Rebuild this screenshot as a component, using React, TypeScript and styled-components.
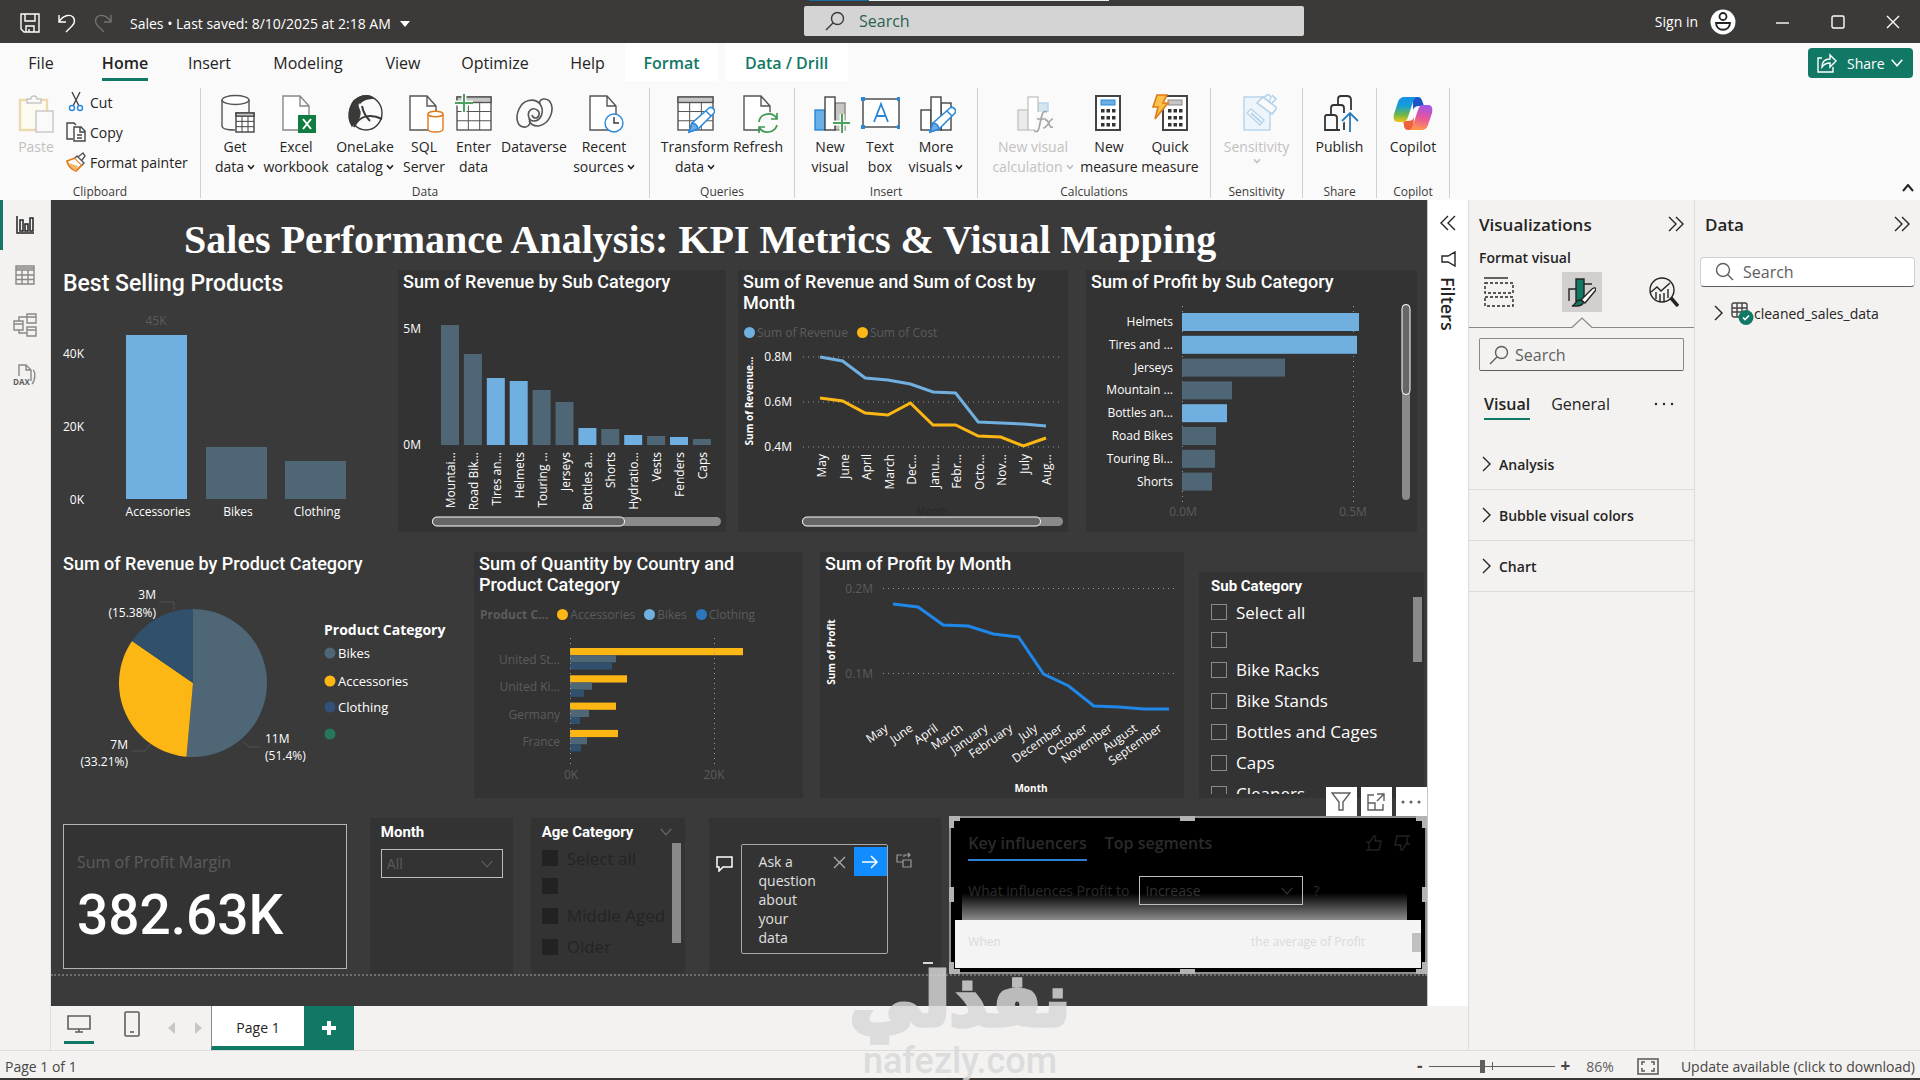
import React from "react";
import styled, { createGlobalStyle } from "styled-components";

const ui = `"Open Sans", "Noto Sans", sans-serif`;
const din = `Roboto, "Liberation Sans", sans-serif`;
const green = "#117865";
const sky = "#70b0e0";
const slate = "#4f6677";
const amber = "#fdb714";
const navy = "#30506c";

const Global = createGlobalStyle`
  * { box-sizing: border-box; }
  html, body { margin: 0; height: 100%; }
  #root { height: 100%; }
  body { font-family: ${ui}; font-size: 14px; color: #252423; background: #f3f2f1; overflow: hidden; }
  button, input, select { font: inherit; color: inherit; margin: 0; }
  button { border: 0; background: none; padding: 0; cursor: pointer; }
  h1, h2, h3, p, ul { margin: 0; padding: 0; font-weight: inherit; }
  svg { display: block; flex: none; }
`;

const Shell = styled.div`
  display: flex;
  flex-direction: column;
  height: 100vh;
  border-bottom: 2px solid #383735;
`;

/* ---------- title bar ---------- */
const TitleBar = styled.header`
  position: relative;
  display: grid;
  grid-template-columns: 804fr 500px 616fr;
  align-items: center;
  height: 43px;
  flex: none;
  background: #3b3a38;
  color: #fff;
`;
const TabPeek = styled.div`
  position: absolute;
  top: 0;
  left: 809px;
  width: 300px;
  height: 1px;
  background: linear-gradient(90deg, #1c6a9c 60px, #e4efee 60px);
`;
const QuickBar = styled.div`
  display: flex;
  align-items: center;
  gap: 18px;
  padding: 2px 0 0 20px;
`;
const FileName = styled.button`
  display: flex;
  align-items: center;
  gap: 9px;
  line-height: 20px;
  padding-top: 3px;
  white-space: nowrap;
`;
const TopSearch = styled.label`
  display: flex;
  align-items: center;
  gap: 14px;
  height: 30px;
  margin-bottom: 1px;
  padding-left: 21px;
  border-radius: 2px;
  background: #d4d4d4;
  color: #3b3a38;
`;
const PlainInput = styled.input<{ $tint?: string }>`
  flex: 1;
  min-width: 0;
  border: 0;
  outline: 0;
  padding: 0;
  background: transparent;
  font-size: 16px;
  &::placeholder { color: ${(p) => p.$tint || "#605e5c"}; opacity: 1; }
`;
const WindowTools = styled.div`
  display: flex;
  align-items: center;
  justify-content: flex-end;
  padding-right: 17px;
`;
const SignIn = styled.button`
  display: flex;
  align-items: center;
  gap: 12px;
  margin-right: 2px;
`;
const WinButton = styled.button`
  display: grid;
  place-items: center;
  width: 20px;
  height: 30px;
  margin-left: 35px;
`;

/* ---------- ribbon ---------- */
const TabRow = styled.nav`
  display: flex;
  align-items: flex-start;
  height: 38px;
  flex: none;
  padding: 0 7px 0 8px;
  background: #fafafa;
`;
const Tab = styled.button<{ $w: number; $on?: boolean; $ctx?: boolean }>`
  width: ${(p) => p.$w}px;
  height: 38px;
  display: flex;
  justify-content: center;
  font-size: 16px;
  line-height: 34px;
  padding-top: 3px;
  white-space: nowrap;
  font-weight: ${(p) => (p.$on || p.$ctx ? 600 : 400)};
  color: ${(p) => (p.$ctx ? green : "#252423")};
  background: ${(p) => (p.$ctx ? "#fff" : "transparent")};
  margin-left: ${(p) => (p.$ctx ? 7 : 0)}px;
  span { height: 35px; border-bottom: 3px solid ${(p) => (p.$on ? green : "transparent")}; }
`;
const ShareButton = styled.button`
  display: flex;
  align-items: center;
  gap: 10px;
  width: 105px;
  height: 30px;
  margin: 5px 0 0 auto;
  padding: 0 9px;
  border-radius: 4px;
  color: #fff;
  background: ${green};
  svg:last-child { margin-left: -5px; }
`;
const Ribbon = styled.section`
  display: flex;
  height: 119px;
  flex: none;
  padding: 7px 6px 2px 0;
  background: #fafafa;
`;
const Tools = styled.div`
  display: flex;
  flex: 1;
`;
const Group = styled.div<{ $w: number; $pad?: number }>`
  display: flex;
  flex-direction: column;
  width: ${(p) => p.$w}px;
  border-right: 1px solid #d2d0ce;
  ${Tools} { padding-left: ${(p) => p.$pad || 0}px; }
`;
const GroupName = styled.div`
  text-align: center;
  font-size: 12px;
  line-height: 16px;
  color: #3b3a38;
  margin-bottom: -2px;
`;
const Tool = styled.button<{ $w: number; $off?: boolean }>`
  display: flex;
  flex-direction: column;
  align-items: center;
  width: ${(p) => p.$w}px;
  padding-top: 6px;
  line-height: 20px;
  white-space: nowrap;
  color: ${(p) => (p.$off ? "#c3c1bf" : "#252423")};
  & > svg { margin-bottom: 3px; }
  & > span { display: flex; align-items: center; gap: 3px; }
`;
const ClipList = styled.div`
  display: flex;
  flex-direction: column;
  padding-left: 10px;
  margin-top: -1px;
`;
const ClipItem = styled.button`
  display: flex;
  align-items: center;
  gap: 4px;
  height: 30px;
  white-space: nowrap;
`;
const Collapse = styled.button`
  margin: auto 0 6px auto;
`;

/* ---------- work area ---------- */
const Work = styled.div`
  display: flex;
  flex: 1;
  min-height: 0;
`;
const Rail = styled.nav`
  width: 51px;
  flex: none;
  border-right: 1px solid #e1dfdd;
`;
const RailButton = styled.button<{ $on?: boolean }>`
  display: grid;
  place-items: center;
  width: 50px;
  height: 50px;
  border-left: 3px solid ${(p) => (p.$on ? green : "transparent")};
  padding-right: 3px;
`;
const Center = styled.div`
  display: flex;
  flex-direction: column;
  flex: 1;
  min-width: 0;
`;
const Stage = styled.div`
  display: flex;
  flex: 1;
  min-height: 0;
`;
const Report = styled.main`
  flex: 1;
  min-width: 0;
  background: #3a3a3a;
  color: #fff;
  overflow: hidden;
`;
const ReportTitle = styled.h1`
  padding: 16px 0 6px 133px;
  font: bold 40px/48px "Liberation Serif", serif;
  white-space: nowrap;
`;
const Row = styled.div<{ $h: number; $right: number; $last?: boolean }>`
  display: flex;
  height: ${(p) => p.$h}px;
  padding: 0 ${(p) => p.$right}px 0 12px;
  margin-bottom: ${(p) => (p.$last ? 0 : 20)}px;
`;
const Visual = styled.section<{ $w: number; $gap?: number; $bare?: boolean; $top?: number }>`
  position: relative;
  display: flex;
  flex-direction: column;
  flex: ${(p) => p.$w} 1 0;
  min-width: 0;
  margin-right: ${(p) => p.$gap || 0}px;
  margin-top: ${(p) => p.$top || 0}px;
  background: ${(p) => (p.$bare ? "transparent" : "#333")};
  & > svg { width: 100%; flex: 1; min-height: 0; }
`;
const VTitle = styled.h2<{ $left?: number; $big?: boolean }>`
  padding: 1px 12px 0 ${(p) => p.$left ?? 5}px;
  font-family: ${din};
  font-weight: 500;
  font-size: ${(p) => (p.$big ? 23 : 18)}px;
  line-height: ${(p) => (p.$big ? 26 : 21)}px;
`;
const Legend = styled.ul`
  display: flex;
  align-items: center;
  gap: 5px;
  height: 18px;
  margin-top: 10px;
  padding-left: 6px;
  list-style: none;
  font-size: 12px;
  color: #5c5c5c;
  white-space: nowrap;
`;
const Key = styled.li<{ $c?: string }>`
  display: flex;
  align-items: center;
  gap: 2px;
  font-weight: ${(p) => (p.$c ? 400 : 700)};
  margin-right: 4px;
  &::before {
    content: "";
    display: ${(p) => (p.$c ? "block" : "none")};
    width: 11px;
    height: 11px;
    border-radius: 50%;
    background: ${(p) => p.$c};
  }
`;
const Axis = styled.text<{ $dim?: boolean; $bold?: boolean; $size?: number; $c?: string }>`
  font-family: ${ui};
  font-size: ${(p) => p.$size || 12}px;
  font-weight: ${(p) => (p.$bold ? 700 : 400)};
  fill: ${(p) => p.$c || (p.$dim ? "#5c5c5c" : "#fff")};
`;
const Guide = styled.line`
  stroke: #9a9a9a;
  stroke-width: 1;
  stroke-dasharray: 1 4;
`;

/* ---------- slicers ---------- */
const SlicerTitle = styled.h3`
  display: flex;
  align-items: center;
  justify-content: space-between;
  flex: none;
  padding-right: 12px;
  font-family: ${din};
  font-weight: 700;
  font-size: 15px;
  line-height: 20px;
  svg { color: #6a6a6a; }
`;
const Slicer = styled.div<{ $left: number }>`
  display: flex;
  flex-direction: column;
  flex: 1;
  min-height: 0;
  padding: 4px 0 4px ${(p) => p.$left}px;
`;
const Options = styled.div`
  min-height: 0;
  overflow: hidden;
  padding-top: 2px;
`;
const Option = styled.label<{ $dark?: boolean; $h?: number }>`
  display: flex;
  align-items: center;
  gap: 9px;
  height: ${(p) => p.$h || 31}px;
  font-size: 17px;
  white-space: nowrap;
  color: ${(p) => (p.$dark ? "#242424" : "#fff")};
  input {
    appearance: none;
    width: 16px;
    height: 16px;
    flex: none;
    border: 1px solid ${(p) => (p.$dark ? "#222" : "#8a8a8a")};
    background: ${(p) => (p.$dark ? "#222" : "transparent")};
  }
`;
const Thumb = styled.div<{ $top: number; $h: number; $right: number; $c?: string }>`
  position: absolute;
  right: ${(p) => p.$right}px;
  top: ${(p) => p.$top}px;
  width: 9px;
  height: ${(p) => p.$h}px;
  background: ${(p) => p.$c || "#8a8988"};
`;
const SelectBox = styled.div<{ $w: number; $top?: number }>`
  display: flex;
  align-items: center;
  width: ${(p) => p.$w}px;
  height: 29px;
  margin-top: ${(p) => p.$top || 0}px;
  padding: 0 8px 0 5px;
  border: 1px solid #bdbdbd;
  color: #5c5c5c;
  select { flex: 1; min-width: 0; appearance: none; border: 0; outline: 0; padding: 0; background: transparent; }
`;

/* ---------- bottom visuals ---------- */
const Card = styled.section`
  flex: 269 1 0;
  min-width: 0;
  margin: 6px 23px 5px 0;
  padding: 25px 0 0 13px;
  border: 1px solid #b4b4b4;
  background: #333;
`;
const CardLabel = styled.p`
  font-size: 16px;
  line-height: 24px;
  color: #5c5c5c;
`;
const CardValue = styled.p`
  font: 500 55px/64px ${din};
  margin-top: 9px;
`;
const AskRow = styled.div`
  display: flex;
  align-items: flex-start;
  padding: 26px 0 0 7px;
  gap: 8px;
  & > svg { margin-top: 11px; }
  & > svg:last-child { margin-top: 8px; }
`;
const AskBox = styled.div`
  display: flex;
  width: 147px;
  height: 110px;
  border: 1px solid #a8a8a8;
  border-radius: 2px;
  color: #e0e0e0;
  p { width: 73px; padding: 7px 0 0 17px; line-height: 19px; }
`;
const AskClear = styled.button`
  height: 34px;
  margin-left: 18px;
`;
const AskGo = styled.button`
  display: grid;
  place-items: center;
  width: 33px;
  height: 29px;
  margin: 2px 0 0 auto;
  background: #118dff;
`;
const Dash = styled.div`
  width: 10px;
  height: 2px;
  margin: 8px 8px 0 auto;
  background: #d8d8d8;
`;
const Influencers = styled.section`
  position: relative;
  display: flex;
  flex-direction: column;
  flex: 466 1 0;
  min-width: 0;
  margin-top: -2px;
  padding: 12px 4px 3px;
  border: 2px solid #8f8f8f;
  background: #000;
  color: #2b2b2b;
`;
const InfTabs = styled.div`
  display: flex;
  align-items: flex-start;
  gap: 18px;
  padding: 0 10px 0 13px;
  font-size: 16px;
  font-weight: 600;
  line-height: 27px;
  button { height: 31px; padding-bottom: 3px; border-bottom: 2px solid transparent; }
  button:first-child { border-bottom-color: #2c80d3; }
  svg { margin-top: 5px; }
  svg:first-of-type { margin-left: auto; }
  svg:last-child { margin-left: -6px; }
`;
const Question = styled.div`
  display: flex;
  align-items: center;
  gap: 10px;
  height: 31px;
  margin-top: 14px;
  padding-left: 13px;
  z-index: 1;
  select, div { color: #333; }
`;
const Fade = styled.div`
  height: 27px;
  margin: -13px 14px 0 7px;
  background: linear-gradient(#000, #8a8a8a);
`;
const Sheet = styled.div`
  position: relative;
  display: flex;
  justify-content: space-between;
  height: 48px;
  padding: 12px 56px 0 13px;
  background: #f4f4f4;
  color: #dadada;
  line-height: 20px;
  font-size: 12px;
`;
const Handle = styled.i<{ $x: string; $y: string; $w: number; $h: number }>`
  position: absolute;
  left: ${(p) => p.$x};
  top: ${(p) => p.$y};
  width: ${(p) => p.$w}px;
  height: ${(p) => p.$h}px;
  background: #b3b3b3;
`;
const HeaderTools = styled.div`
  position: absolute;
  right: -2px;
  top: -31px;
  display: flex;
  gap: 4px;
  button { display: grid; place-items: center; width: 31px; height: 29px; background: #fff; }
`;
const PageEdge = styled.div`
  border-top: 2px dotted #6f6f6f;
`;

/* ---------- filters pane ---------- */
const Filters = styled.aside`
  display: flex;
  flex-direction: column;
  align-items: center;
  gap: 20px;
  width: 41px;
  flex: none;
  padding-top: 15px;
  background: #fff;
  border-left: 1px solid #c8c8c8;
`;
const FiltersName = styled.h2`
  display: flex;
  align-items: center;
  gap: 10px;
  writing-mode: vertical-rl;
  font-size: 18px;
  font-weight: 600;
  line-height: 22px;
`;

/* ---------- page tabs ---------- */
const PageBar = styled.div`
  display: flex;
  height: 44px;
  flex: none;
  padding-left: 13px;
`;
const DeviceButton = styled.button<{ $on?: boolean }>`
  display: grid;
  place-items: center;
  width: 30px;
  height: 38px;
  margin-right: 23px;
  border-bottom: 3px solid ${(p) => (p.$on ? green : "transparent")};
`;
const Pager = styled.div`
  display: flex;
  align-items: center;
  justify-content: space-between;
  width: 34px;
  margin: 0 9px 0 -2px;
`;
const PageTab = styled.button`
  width: 93px;
  padding-top: 3px;
  border-left: 1px solid #8a8a8a;
  border-bottom: 4px solid ${green};
  background: #fff;
`;
const AddPage = styled.button`
  display: grid;
  place-items: center;
  width: 50px;
  background: ${green};
`;

/* ---------- right panes ---------- */
const Pane = styled.aside`
  width: 226px;
  flex: none;
  border-left: 1px solid #dedcda;
`;
const PaneHead = styled.div`
  display: flex;
  justify-content: space-between;
  align-items: center;
  height: 32px;
  margin-top: 8px;
  padding: 0 10px;
  h2 { font-size: 17px; font-weight: 600; }
`;
const SubHead = styled.p`
  padding: 8px 0 0 10px;
  font-weight: 600;
  line-height: 20px;
`;
const ModeRow = styled.div`
  display: flex;
  justify-content: space-between;
  padding: 4px 10px 0;
`;
const ModeButton = styled.button<{ $on?: boolean }>`
  display: grid;
  place-items: center;
  width: 40px;
  height: 40px;
  background: ${(p) => (p.$on ? "#d2d0ce" : "transparent")};
`;
const Notch = styled.div`
  display: flex;
  align-items: flex-end;
  height: 16px;
  &::before, &::after { content: ""; flex: 1; border-bottom: 1px solid #8a8886; }
`;
const PaneSearch = styled.label<{ $soft?: boolean }>`
  display: flex;
  align-items: center;
  gap: ${(p) => (p.$soft ? 8 : 6)}px;
  height: ${(p) => (p.$soft ? 30 : 33)}px;
  margin: ${(p) => (p.$soft ? "17px 5px 0" : "10px 10px 0")};
  padding-left: ${(p) => (p.$soft ? 14 : 9)}px;
  border: 1px solid ${(p) => (p.$soft ? "#d1d1d1" : "#8a8886")};
  border-bottom-color: #605e5c;
  border-radius: ${(p) => (p.$soft ? 4 : 2)}px;
  background: ${(p) => (p.$soft ? "#fff" : "transparent")};
`;
const FormatTabs = styled.div`
  display: flex;
  align-items: flex-start;
  gap: 21px;
  height: 68px;
  padding: 19px 20px 0 15px;
  font-size: 16px;
  line-height: 28px;
  button:first-child { font-weight: 600; border-bottom: 2px solid ${green}; }
  button:last-child { margin-left: auto; padding-top: 12px; }
`;
const Section = styled.button`
  display: flex;
  align-items: center;
  gap: 7px;
  width: 100%;
  height: 51px;
  padding: 0 0 0 13px;
  border-bottom: 1px solid #dedcda;
  font-weight: 600;
`;
const TableNode = styled.button`
  display: flex;
  align-items: center;
  height: 28px;
  margin-top: 12px;
  padding-left: 19px;
  gap: 7px;
  span { margin-left: -8px; }
`;

/* ---------- status bar ---------- */
const Status = styled.footer`
  display: flex;
  align-items: center;
  height: 28px;
  flex: none;
  padding: 3px 5px 0;
  border-top: 1px solid #dedcda;
  color: #484644;
  background: #f3f2f1;
`;
const ZoomTools = styled.div`
  display: flex;
  align-items: center;
  gap: 6px;
  margin-left: auto;
  margin-right: 22px;
  b { font-size: 17px; line-height: 20px; }
  span { margin: 0 17px 0 10px; color: #605e5c; }
`;
const Range = styled.input`
  appearance: none;
  width: 126px;
  height: 14px;
  background: linear-gradient(#605e5c, #605e5c) center / 100% 1px no-repeat,
    linear-gradient(#605e5c, #605e5c) 63px center / 1px 8px no-repeat;
  &::-webkit-slider-thumb { appearance: none; width: 5px; height: 13px; background: #605e5c; }
`;
const Watermark = styled.div`
  position: absolute;
  left: 844px;
  top: 948px;
  width: 232px;
  text-align: center;
  color: #d8d8d8;
  opacity: 0.82;
  pointer-events: none;
  p:first-child { font: 700 72px/104px "DejaVu Sans", sans-serif; -webkit-text-stroke: 5px #d8d8d8; }
  p:last-child { font: 500 36px/34px ${din}; margin-top: -8px; }
`;

/* ---------- icons ---------- */
type IconProps = { w?: number; h?: number; vb?: string; sw?: number; c?: string; children?: React.ReactNode };
const Icon = ({ w = 40, h = 40, vb, sw = 1.4, c = "currentColor", children }: IconProps) => (
  <svg width={w} height={h} viewBox={vb || `0 0 ${w} ${h}`} fill="none" stroke={c} strokeWidth={sw} aria-hidden="true">
    {children}
  </svg>
);
const Down = ({ s = 8, sw = 1.6 }: { s?: number; sw?: number }) => (
  <Icon w={s} h={s} vb="0 0 8 8" sw={sw}><path d="M1 2.2 4 5.6 7 2.2" /></Icon>
);
const Chevrons = ({ left }: { left?: boolean }) => (
  <Icon w={16} h={16}><path d={left ? "M8 1 1 8l7 7M15 1 8 8l7 7" : "M1 1l7 7-7 7M8 1l7 7-7 7"} /></Icon>
);
const RightChevron = () => <Icon w={10} h={16}><path d="M1 1l7 7-7 7" /></Icon>;
const Lens = ({ flip, c = "#605e5c" }: { flip?: boolean; c?: string }) => (
  <Icon w={20} h={20} c={c}>
    {flip ? <><circle cx="12.5" cy="7.5" r="6" /><path d="M8.200 11.800 1 19" /></> : <><circle cx="8" cy="8" r="6.500" /><path d="M12.800 12.800 18 18" /></>}
  </Icon>
);
const page = "M7 2h17l9 10v24H7ZM24 2v10h9";
const Grid = ({ x, y, w, h, c = "#555", head = "#c8c6c4" }: { x: number; y: number; w: number; h: number; c?: string; head?: string }) => (
  <g stroke={c}>
    <rect x={x} y={y} width={w} height={h} fill="#fff" />
    <rect x={x} y={y} width={w} height={h / 6} fill={head} />
    <path strokeWidth="1" d={`M${x + w / 3} ${y + h / 6}v${(h * 5) / 6}M${x + (w * 2) / 3} ${y + h / 6}v${(h * 5) / 6}M${x} ${y + h * 0.44}h${w}M${x} ${y + h * 0.72}h${w}`} />
  </g>
);
const Pencil = () => (
  <g stroke="#2b88d8" strokeWidth="1.500">
    <path d="M14 38l3-9 17-15c3-2 7 2 5 5L23 35Z" fill="#fff" />
    <path d="M14 38l3-9c3 0 6 3 6 6Z" fill="#69afe5" />
    <path d="M31 17l5 5" />
  </g>
);
const Calc = ({ x }: { x: number }) => (
  <g>
    <rect x={x} y="2" width="24" height="34" fill="#fff" stroke="#444" strokeWidth="2" />
    <rect x={x + 5} y="6" width="14" height="5" fill={x < 10 ? "#69afe5" : "#c8c6c4"} stroke={x < 10 ? "#2b88d8" : "#8a8886"} strokeWidth="1" />
    {[15, 22, 29].map((y) => [5, 10.500, 16].map((dx) => <rect key={y + "-" + dx} x={x + dx} y={y} width="3.500" height="3.500" fill="#333" stroke="none" />))}
  </g>
);
const I: Record<string, React.ReactNode> = {
  paste: <Icon><g stroke="#ecd9ae" strokeWidth="2.400"><rect x="4" y="6" width="27" height="30" fill="#fdfaf2" /></g><path d="M11 9V5h4c0-4 6-4 6 0h4v4Z" fill="#fafafa" stroke="#c8c6c4" /><rect x="20" y="17" width="17" height="21" fill="#fafafa" stroke="#c8c6c4" /></Icon>,
  get: <Icon c="#555"><path d="M7 6v26c0 3 6 4 13 4M34 6v12" /><ellipse cx="20.500" cy="6" rx="13.500" ry="4.500" fill="#fff" /><Grid x={21} y={19} w={18} h={19} c="#444" /></Icon>,
  excel: <Icon c="#8a8886"><path d={page} fill="#fff" /><rect x="22" y="21" width="18" height="18" fill="#107c41" stroke="none" /><path d="M27 25l8 10M35 25l-8 10" stroke="#fff" strokeWidth="2" /></Icon>,
  lake: <Icon c="#3b3a38"><ellipse cx="21" cy="19" rx="16" ry="17" /><path d="M18 2C4 5 1 22 7 32c2-2 8-5 8-13 0-4-3-5-2-9 1-4 5-6 5-8Z" fill="#3b3a38" /><path d="M14 6c2-4 9-6 14-2-3 1-9 0-13 5Z" fill="#3b3a38" /><path d="M17 12c1 5 4 11 8 15M9 33c5-11 16-14 28-8" strokeWidth="2" /></Icon>,
  sql: <Icon c="#555"><path d={page} fill="#fff" transform="translate(-1 0)" /><path d="M24 20v15c0 4 15 4 15 0V20" fill="#fff" stroke="#e07b1a" /><ellipse cx="31.500" cy="20" rx="7.500" ry="2.800" fill="#fff" stroke="#e07b1a" /></Icon>,
  enter: <Icon><Grid x={3} y={3} w={34} h={33} /><path d="M10 0v18M1 9h18" stroke="#fafafa" strokeWidth="5" /><path d="M10 0v18M1 9h18" stroke="#4ea35c" strokeWidth="2" /></Icon>,
  verse: <Icon c="#555" sw={1.600}><path d="M12 33C3 34 1 24 5 15 9 6 20 3 26 10c5 7 1 17-6 17-6 0-8-9-2-12 4-1 8 2 7 6-1 4-6 4-7 0" /><path d="M29 5c9-1 11 10 7 18-5 10-16 12-21 4M12 33c4-1 5-5 3-8M29 5c-3 1-4 3-3 5" /></Icon>,
  recent: <Icon c="#555"><path d={page} fill="#fff" transform="translate(-1 0)" /><circle cx="30" cy="29" r="9" fill="#fff" stroke="#2b88d8" /><path d="M30 23v6h5" stroke="#333" /></Icon>,
  transform: <Icon><Grid x={3} y={3} w={35} h={33} /><Pencil /></Icon>,
  refresh: <Icon c="#555"><path d={page} fill="#fff" transform="translate(-1 0)" /><circle cx="30" cy="29" r="11" fill="#fafafa" stroke="none" /><path d="M21 28c1-9 14-11 18-3M39 19v6h-6M39 31c-2 8-14 10-18 2M21 39v-6h6" stroke="#3f9a52" strokeWidth="1.700" /></Icon>,
  newvis: <Icon c="#444"><rect x="25" y="9" width="10" height="27" fill="#c8c6c4" stroke="#8a8886" /><rect x="5" y="16" width="10" height="20" fill="#69afe5" stroke="#2b88d8" /><rect x="15" y="3" width="10" height="33" fill="#fff" /><path d="M32 20v19M23 29h18" stroke="#fafafa" strokeWidth="5" /><path d="M32 20v19M23 29h17" stroke="#4ea35c" strokeWidth="2" /></Icon>,
  textbox: <Icon c="#444"><rect x="3" y="5" width="36" height="28" fill="#fff" /><path d="M14 28l7-18 7 18M16.500 22h9" stroke="#2b88d8" strokeWidth="1.800" />{[[1, 3], [37, 3], [1, 31], [37, 31]].map(([x, y]) => <rect key={x + "-" + y} x={x} y={y} width="4" height="4" fill="#2b88d8" stroke="none" />)}</Icon>,
  morevis: <Icon c="#444"><rect x="25" y="9" width="10" height="27" fill="#fff" /><rect x="5" y="16" width="10" height="20" fill="#fff" /><rect x="15" y="3" width="10" height="33" fill="#fff" /><Pencil /></Icon>,
  fx: <Icon c="#c8c6c4"><rect x="5" y="16" width="10" height="20" fill="#eceaea" /><rect x="25" y="9" width="10" height="12" fill="#d5e6f3" stroke="#b5d3ea" /><rect x="15" y="3" width="10" height="33" fill="#fff" /><rect x="22" y="18" width="20" height="22" fill="#fafafa" stroke="none" /><path d="M34 18c-4-2-5 2-6 7l-2 9c-1 4-2 4-5 3M24 25h9M32 26c5-1 3 9 8 7M40 25c-4 0-5 9-10 9" stroke="#a8a6a4" strokeWidth="1.700" /></Icon>,
  measure: <Icon><Calc x={7} /></Icon>,
  quick: <Icon><Calc x={13} /><path d="M7 1h10l-4 8h5L5 25l3-12H3Z" fill="#f9c14a" stroke="#e07b1a" strokeWidth="1.600" /></Icon>,
  sens: <Icon c="#b5d3ea"><rect x="7" y="3" width="26" height="33" fill="#eef5fa" /><path d="M10 19l4-4 13 11-4 5Z" fill="#fafafa" /><path d="M14 19l10 9" strokeWidth="2" /><path d="M20 9l6-6 14 11-5 6ZM27 4l4-4 4 4M35 9l4-4-4-4" fill="#fafafa" strokeWidth="1.700" /></Icon>,
  publish: <Icon c="#333" sw={1.800}><path d="M20 36H5V23q0-2 2-2h7q3 0 3 3v12M11 20v-6q0-3 3-3h7q3 0 3 3v5M18 11V5q0-3 3-3h6q4 0 4 4v10M24 36V27" /><path d="M30 38V19M22 27l8-8 8 8" stroke="#fafafa" strokeWidth="5" /><path d="M30 38V19M22 27l8-8 8 8" stroke="#2b7cb8" /></Icon>,
  copilot: (
    <Icon>
      <defs>
        <linearGradient id="cpA" x1="0" y1="0" x2="0" y2="1"><stop offset="0" stopColor="#1690e6" /><stop offset=".35" stopColor="#139ddb" /><stop offset=".7" stopColor="#6cb64b" /><stop offset="1" stopColor="#f5c518" /></linearGradient>
        <linearGradient id="cpB" x1=".6" y1="0" x2=".4" y2="1"><stop offset="0" stopColor="#a056e8" /><stop offset=".5" stopColor="#e8559a" /><stop offset="1" stopColor="#ff9a4a" /></linearGradient>
      </defs>
      <path d="M20 3h5c3 0 4 3 5 6l1 3h-5c-3 0-5 1-6 4z" fill="#1c55c9" stroke="none" />
      <path d="M20 36h-5c-3 0-4-3-4-5l-1-4h5c3 0 5-1 6-4z" fill="#f0603a" stroke="none" />
      <path d="M12 3h13c-3 0-4 2-5 5l-5 15c-1 3-2 5-5 5H5c-4 0-5-3-4-8l4-12c1-3 3-5 7-5Z" fill="url(#cpA)" stroke="none" />
      <path d="M28 36H15c3 0 4-2 5-5l5-15c1-3 2-5 5-5h5c4 0 5 3 4 8l-4 12c-1 3-3 5-7 5Z" fill="url(#cpB)" stroke="none" />
    </Icon>
  ),
};

type ToolDef = [icon: string, lines: string[], width: number, drop?: boolean, off?: boolean];
const groups: { name: string; w: number; pad?: number; tools: ToolDef[] }[] = [
  { name: "Data", w: 449, pad: 6, tools: [["get", ["Get", "data"], 56, true], ["excel", ["Excel", "workbook"], 66], ["lake", ["OneLake", "catalog"], 72, true], ["sql", ["SQL", "Server"], 46], ["enter", ["Enter", "data"], 53], ["verse", ["Dataverse"], 68], ["recent", ["Recent", "sources"], 72, true]] },
  { name: "Queries", w: 145, pad: 8, tools: [["transform", ["Transform", "data"], 74, true], ["refresh", ["Refresh"], 52]] },
  { name: "Insert", w: 183, pad: 8, tools: [["newvis", ["New", "visual"], 54], ["textbox", ["Text", "box"], 46], ["morevis", ["More", "visuals"], 66, true]] },
  { name: "Calculations", w: 233, pad: 11, tools: [["fx", ["New visual", "calculation"], 88, true, true], ["measure", ["New", "measure"], 64], ["quick", ["Quick", "measure"], 58]] },
  { name: "Sensitivity", w: 92, tools: [["sens", ["Sensitivity", ""], 91, true, true]] },
  { name: "Share", w: 74, tools: [["publish", ["Publish"], 73]] },
  { name: "Copilot", w: 73, tools: [["copilot", ["Copilot"], 72]] },
];

const Header = () => (
  <TitleBar>
    <TabPeek />
    <QuickBar>
      <button aria-label="Save"><Icon w={20} h={20}><path d="M1 1h18v18H4l-3-3ZM5 1v7h10V1M6 19v-6h8v6M9 19v-3" /></Icon></button>
      <button aria-label="Undo"><Icon w={18} h={20}><path d="M1 2v7h7M1 9C5 2 12 1 15 4c3 4 1 7-1 9l-6 6" /></Icon></button>
      <button aria-label="Redo"><Icon w={18} h={20} c="#72706e"><path d="M17 2v7h-7M17 9C13 2 6 1 3 4 0 8 2 11 4 13l6 6" /></Icon></button>
      <FileName>Sales • Last saved: 8/10/2025 at 2:18 AM<Icon w={10} h={6}><path d="M0 0h10L5 6Z" fill="#fff" stroke="none" /></Icon></FileName>
    </QuickBar>
    <TopSearch><Lens flip c="#3b3a38" /><PlainInput placeholder="Search" aria-label="Search" $tint="#2c6152" /></TopSearch>
    <WindowTools>
      <SignIn>Sign in<Icon w={26} h={26}><circle cx="13" cy="13" r="12.500" fill="#fff" stroke="none" /><g stroke="#222" strokeWidth="1.800"><circle cx="13" cy="7.500" r="3.500" /><path d="M6 14h14c0 9-14 9-14 0Z" /></g></Icon></SignIn>
      <WinButton aria-label="Minimize"><Icon w={14} h={14}><path d="M0 8h13" /></Icon></WinButton>
      <WinButton aria-label="Maximize"><Icon w={14} h={14}><rect x="1" y="1" width="12" height="12" rx="1.500" /></Icon></WinButton>
      <WinButton aria-label="Close"><Icon w={14} h={14}><path d="M1 1l12 12M13 1 1 13" /></Icon></WinButton>
    </WindowTools>
  </TitleBar>
);

const RibbonArea = () => (
  <>
    <TabRow>
      <Tab $w={66}><span>File</span></Tab>
      <Tab $w={102} $on><span>Home</span></Tab>
      <Tab $w={67}><span>Insert</span></Tab>
      <Tab $w={130}><span>Modeling</span></Tab>
      <Tab $w={60}><span>View</span></Tab>
      <Tab $w={124}><span>Optimize</span></Tab>
      <Tab $w={61}><span>Help</span></Tab>
      <Tab $w={93} $ctx><span>Format</span></Tab>
      <Tab $w={123} $ctx><span>Data / Drill</span></Tab>
      <ShareButton><Icon w={20} h={20}><path d="M5 5H1v14h15v-5M5 14c0-6 3-8 8-8V2l6 6-6 6v-4c-4 0-6 1-8 4Z" /></Icon>Share<Down s={14} sw={0.9} /></ShareButton>
    </TabRow>
    <Ribbon>
      <Group $w={201} $pad={16}>
        <Tools>
          <Tool $w={40} $off>{I.paste}<span>Paste</span></Tool>
          <ClipList>
            <ClipItem><Icon w={20} h={22}><path d="M6 1l7 14M14 1 7 15" stroke="#444" /><circle cx="6" cy="17" r="2.500" stroke="#2b88d8" /><circle cx="14" cy="17" r="2.500" stroke="#2b88d8" /></Icon>Cut</ClipItem>
            <ClipItem><Icon w={20} h={20} c="#444"><path d="M7 17H1V1h7l2 2" /><path d="M8 5h7l4 4v10H8ZM14 5v5h5M11 13h5M11 16h5" fill="#fff" /></Icon>Copy</ClipItem>
            <ClipItem><Icon w={20} h={20} c="#555"><path d="M1 9l8-3 7 7-6 6c-5-2-8-6-9-10Z" fill="#fff" stroke="#e07b1a" strokeWidth="1.800" /><path d="M3 11l9 3-2 5c-4-2-6-5-7-8Z" fill="#f5b56b" stroke="none" /><path d="M9 6l2-2 7 7-2 2M12 5l5-4 2 3-3 4" fill="#fff" /></Icon>Format painter</ClipItem>
          </ClipList>
        </Tools>
        <GroupName>Clipboard</GroupName>
      </Group>
      {groups.map((g) => (
        <Group key={g.name} $w={g.w} $pad={g.pad}>
          <Tools>
            {g.tools.map(([icon, lines, w, drop, off]) => (
              <Tool key={icon} $w={w} $off={off}>
                {I[icon]}
                {lines.map((t, i) => <span key={i}>{t}{drop && i === 1 ? <Down /> : null}</span>)}
              </Tool>
            ))}
          </Tools>
          <GroupName>{g.name}</GroupName>
        </Group>
      ))}
      <Collapse aria-label="Collapse ribbon"><Icon w={12} h={8} sw={2}><path d="M1 7l5-6 5 6" /></Icon></Collapse>
    </Ribbon>
  </>
);

/* ---------- charts ---------- */
const HScroll = ({ x, w, t, y }: { x: number; w: number; t: number; y: number }) => (
  <g><rect x={x} y={y} width={w} height="9" rx="4.500" fill="#8a8a8a" /><rect x={x + 0.5} y={y} width={t} height="9" rx="4.500" fill="#666" stroke="#fff" /></g>
);

const BestSelling = () => (
  <svg viewBox="63 297 323 235">
    <Axis x="156" y="325" textAnchor="middle" $dim>45K</Axis>
    {[["40K", 358], ["20K", 431], ["0K", 504]].map(([t, y]) => <Axis key={t} x="84" y={y} textAnchor="end">{t}</Axis>)}
    {([["Accessories", 126, 335, 158], ["Bikes", 206, 447, 238], ["Clothing", 285, 461, 317]] as [string, number, number, number][]).map(([t, x, y, c], i) => (
      <g key={t}><rect x={x} y={y} width="61" height={499 - y} fill={i ? slate : sky} /><Axis x={c} y="516" textAnchor="middle">{t}</Axis></g>
    ))}
  </svg>
);

const subRev: [string, number, boolean?][] = [["Mountai...", 120], ["Road Bik...", 91], ["Tires an...", 67, true], ["Helmets", 64, true], ["Touring ...", 55], ["Jerseys", 43], ["Bottles a...", 17, true], ["Shorts", 16], ["Hydratio...", 10, true], ["Vests", 9], ["Fenders", 8, true], ["Caps", 6]];
const RevenueBySub = () => (
  <svg viewBox="398 292 328 240">
    <Axis x="421" y="333" textAnchor="end">5M</Axis>
    <Axis x="421" y="449" textAnchor="end">0M</Axis>
    {subRev.map(([t, v, on], i) => {
      const x = 441 + i * 22.9;
      return <g key={t}><rect x={x} y={445 - v} width="18" height={v} fill={on ? sky : slate} /><Axis transform={`translate(${x + 14} 452) rotate(-90)`} textAnchor="end" $size={12}>{t}</Axis></g>;
    })}
    <HScroll x={432} w={289} t={192} y={517} />
  </svg>
);

const line = (x0: number, step: number, ys: number[]) => ys.map((y, i) => `${x0 + i * step},${y}`).join(" ");
const RevCost = () => (
  <svg viewBox="738 341 330 191">
    {[["0.8M", 357], ["0.6M", 402], ["0.4M", 447]].map(([t, y]) => <g key={t}><Axis x="792" y={Number(y) + 4} textAnchor="end">{t}</Axis><Guide x1="803" x2="1063" y1={y} y2={y} /></g>)}
    <Axis transform="translate(753 401) rotate(-90)" textAnchor="middle" $bold $size={10}>Sum of Revenue...</Axis>
    <polyline fill="none" stroke={sky} strokeWidth="3" points={line(820, 22.600, [357, 361, 378, 380, 384, 392, 393, 422, 423, 424, 426])} />
    <polyline fill="none" stroke={amber} strokeWidth="3" points={line(820, 22.600, [398, 401, 413, 415, 403, 425, 425, 436, 437, 446, 438])} />
    {["May", "June", "April", "March", "Dec...", "Janu...", "Febr...", "Octo...", "Nov...", "July", "Aug..."].map((t, i) => <Axis key={t} transform={`translate(${826 + i * 22.500} 454) rotate(-90)`} textAnchor="end" $size={12}>{t}</Axis>)}
    <Axis x="932" y="515" textAnchor="middle" $size={10} $c="#272727">Month</Axis>
    <HScroll x={802} w={261} t={238} y={517} />
  </svg>
);

const subProfit: [string, number, boolean?][] = [["Helmets", 177, true], ["Tires and ...", 175, true], ["Jerseys", 103], ["Mountain ...", 50], ["Bottles an...", 45, true], ["Road Bikes", 34], ["Touring Bi...", 33], ["Shorts", 30]];
const ProfitBySub = () => (
  <svg viewBox="1086 292 331 240">
    <Guide x1="1182.500" x2="1182.500" y1="306" y2="502" />
    {subProfit.map(([t, w, on], i) => (
      <g key={t}><rect x="1182" y={313 + i * 22.800} width={w} height="18" fill={on ? sky : slate} /><Axis x="1173" y={326 + i * 22.800} textAnchor="end">{t}</Axis></g>
    ))}
    <Guide x1="1353.500" x2="1353.500" y1="306" y2="502" />
    <Axis x="1183" y="516" textAnchor="middle" $dim>0.0M</Axis>
    <Axis x="1353" y="516" textAnchor="middle" $dim>0.5M</Axis>
    <rect x="1402" y="304" width="8" height="196" rx="4" fill="#8a8a8a" />
    <rect x="1402" y="304.500" width="8" height="90" rx="4" fill="#666" stroke="#fff" />
  </svg>
);

const at = (f: number, r = 74) => `${193 + r * Math.sin(f * 2 * Math.PI)} ${683 - r * Math.cos(f * 2 * Math.PI)}`;
const slice = (a: number, b: number) => `M193 683L${at(a)}A74 74 0 ${b - a > 0.5 ? 1 : 0} 1 ${at(b)}Z`;
const Pie = () => (
  <svg viewBox="63 574 411 224">
    <path d={slice(0, 0.514)} fill={slate} />
    <path d={slice(0.514, 0.846)} fill={amber} />
    <path d={slice(0.846, 1)} fill={navy} />
    <path d="M159 602h15v8M132 751h13l5-7M243 741l6 6h11" stroke="#505050" fill="none" />
    <Axis x="156" y="599" textAnchor="end">3M</Axis><Axis x="156" y="617" textAnchor="end">(15.38%)</Axis>
    <Axis x="128" y="749" textAnchor="end">7M</Axis><Axis x="128" y="766" textAnchor="end">(33.21%)</Axis>
    <Axis x="265" y="743">11M</Axis><Axis x="265" y="760">(51.4%)</Axis>
    <Axis x="324" y="635" $bold $size={14}>Product Category</Axis>
    {([["Bikes", 653, slate], ["Accessories", 681, amber], ["Clothing", 707, "#33507a"], ["", 734, "#27775a"]] as [string, number, string][]).map(([t, y, c]) => (
      <g key={y}><circle cx="330" cy={y} r="5.500" fill={c} /><Axis x="338" y={y + 5} $size={13}>{t}</Axis></g>
    ))}
  </svg>
);

const qty: [string, number[]][] = [["United St...", [173, 46, 42]], ["United Ki...", [57, 22, 14]], ["Germany", [46, 19, 10]], ["France", [48, 17, 11]]];
const Quantity = () => (
  <svg viewBox="474 623 329 175">
    {qty.map(([t, v], i) => (
      <g key={t}>
        <Axis x="560" y={664 + i * 27.300} textAnchor="end" $dim>{t}</Axis>
        {v.map((w, j) => <rect key={j} x="570" y={648 + i * 27.300 + j * 7.200} width={w} height="7.200" fill={[amber, slate, navy][j]} />)}
      </g>
    ))}
    <Guide x1="570.500" x2="570.500" y1="638" y2="764" />
    <Guide x1="714.500" x2="714.500" y1="638" y2="764" />
    <Axis x="571" y="779" textAnchor="middle" $dim>0K</Axis>
    <Axis x="714" y="779" textAnchor="middle" $dim>20K</Axis>
  </svg>
);

const ProfitByMonth = () => (
  <svg viewBox="820 574 364 224">
    {[["0.2M", 588], ["0.1M", 673]].map(([t, y]) => <g key={t}><Axis x="873" y={Number(y) + 5} textAnchor="end" $dim>{t}</Axis><Guide x1="883" x2="1175" y1={Number(y) + 0.5} y2={Number(y) + 0.5} /></g>)}
    <polyline fill="none" stroke="#1f87e8" strokeWidth="3" points={line(893, 25.100, [604, 607, 625, 626, 634, 637, 674, 686, 706, 707, 709, 709])} />
    <Axis transform="translate(835 652) rotate(-90)" textAnchor="middle" $bold $size={10}>Sum of Profit</Axis>
    {["May", "June", "April", "March", "January", "February", "July", "December", "October", "November", "August", "September"].map((t, i) => <Axis key={t} transform={`translate(${889 + i * 24.900} 730) rotate(-35)`} textAnchor="end">{t}</Axis>)}
    <Axis x="1031" y="792" textAnchor="middle" $bold $size={10}>Month</Axis>
  </svg>
);

const CanvasArea = () => (
  <Report>
    <ReportTitle>Sales Performance Analysis: KPI Metrics &amp; Visual Mapping</ReportTitle>
    <Row $h={262} $right={10}>
      <Visual $w={323} $gap={12} $bare><VTitle $big $left={0}>Best Selling Products</VTitle><BestSelling /></Visual>
      <Visual $w={328} $gap={12}><VTitle>Sum of Revenue by Sub Category</VTitle><RevenueBySub /></Visual>
      <Visual $w={330} $gap={18}>
        <VTitle>Sum of Revenue and Sum of Cost by Month</VTitle>
        <Legend><Key $c={sky}>Sum of Revenue</Key><Key $c={amber}>Sum of Cost</Key></Legend>
        <RevCost />
      </Visual>
      <Visual $w={331}><VTitle>Sum of Profit by Sub Category</VTitle><ProfitBySub /></Visual>
    </Row>
    <Row $h={246} $right={3}>
      <Visual $w={411} $bare><VTitle $left={0}>Sum of Revenue by Product Category</VTitle><Pie /></Visual>
      <Visual $w={329} $gap={17}>
        <VTitle>Sum of Quantity by Country and Product Category</VTitle>
        <Legend><Key>Product C...</Key><Key $c={amber}>Accessories</Key><Key $c={sky}>Bikes</Key><Key $c="#2c76bd">Clothing</Key></Legend>
        <Quantity />
      </Visual>
      <Visual $w={364} $gap={15}><VTitle>Sum of Profit by Month</VTitle><ProfitByMonth /></Visual>
      <Visual $w={225} $top={20}>
        <Slicer $left={12}>
          <SlicerTitle>Sub Category</SlicerTitle>
          <Options>
            {["Select all", "", "Bike Racks", "Bike Stands", "Bottles and Cages", "Caps", "Cleaners"].map((t, i) => (
              <Option key={t} $h={i < 2 ? 28 : 31}><input type="checkbox" aria-label={t || "Blank"} />{t}</Option>
            ))}
          </Options>
        </Slicer>
        <Thumb $top={25} $h={65} $right={2} />
      </Visual>
    </Row>
    <Row $h={156} $right={0} $last>
      <Card><CardLabel>Sum of Profit Margin</CardLabel><CardValue>382.63K</CardValue></Card>
      <Visual $w={143} $gap={18}>
        <Slicer $left={11}>
          <SlicerTitle>Month</SlicerTitle>
          <SelectBox $w={122} $top={7}><select aria-label="Month"><option>All</option></select><Down s={14} sw={0.7} /></SelectBox>
        </Slicer>
      </Visual>
      <Visual $w={154} $gap={24}>
        <Slicer $left={11}>
          <SlicerTitle>Age Category<Down s={14} sw={0.7} /></SlicerTitle>
          <Options>
            {["Select all", "", "Middle Aged", "Older"].map((t, i) => (
              <Option key={t} $dark $h={i < 2 ? 28 : 31}><input type="checkbox" aria-label={t || "Blank"} />{t}</Option>
            ))}
          </Options>
        </Slicer>
        <Thumb $top={25} $h={100} $right={4} />
      </Visual>
      <Visual $w={233} $gap={8}>
        <AskRow>
          <Icon w={17} h={17} c="#fff" sw={1.500}><path d="M1 2h15v10H7l-4 4v-4H1Z" /></Icon>
          <AskBox>
            <p>Ask a question about your data</p>
            <AskClear aria-label="Clear"><Icon w={13} h={13} c="#b0b0b0" sw={1.200}><path d="M1 1l11 11M12 1 1 12" /></Icon></AskClear>
            <AskGo aria-label="Ask"><Icon w={18} h={14} c="#fff" sw={1.500}><path d="M1 7h15M10 1l6 6-6 6" /></Icon></AskGo>
          </AskBox>
          <Icon w={16} h={16} c="#9a9a9a" sw={1.200}><path d="M7 10H1V3h5M7 8h8v7H7ZM8 5V3h6M12 1l2 2-2 2" /></Icon>
        </AskRow>
        <Dash />
      </Visual>
      <Influencers>
        <InfTabs>
          <button>Key influencers</button><button>Top segments</button>
          <Icon w={17} h={16} c="#222"><path d="M1 7h3v8H1M4 8l5-7c3 0 1 4 1 5h6l-2 9H4" /></Icon>
          <Icon w={17} h={16} c="#222"><path d="M16 9h-3V1h3M13 8l-5 7c-3 0-1-4-1-5H1l2-9h10" /></Icon>
        </InfTabs>
        <Question>What influences Profit to<SelectBox $w={164}><select aria-label="Direction"><option>Increase</option></select><Down s={14} sw={0.7} /></SelectBox>?</Question>
        <Fade />
        <Sheet><span>When</span><span>the average of Profit</span><Thumb $top={13} $h={19} $right={0} $c="#c0c0c0" /></Sheet>
        <Handle $x="-2px" $y="-2px" $w={11} $h={5} /><Handle $x="-2px" $y="-2px" $w={5} $h={12} />
        <Handle $x="calc(100% - 9px)" $y="-2px" $w={11} $h={5} /><Handle $x="calc(100% - 3px)" $y="-2px" $w={5} $h={12} />
        <Handle $x="-2px" $y="calc(100% - 3px)" $w={11} $h={5} /><Handle $x="-2px" $y="calc(100% - 10px)" $w={5} $h={12} />
        <Handle $x="calc(100% - 9px)" $y="calc(100% - 3px)" $w={11} $h={5} /><Handle $x="calc(100% - 3px)" $y="calc(100% - 10px)" $w={5} $h={12} />
        <Handle $x="calc(50% - 8px)" $y="-2px" $w={15} $h={5} /><Handle $x="calc(50% - 8px)" $y="calc(100% - 3px)" $w={15} $h={5} />
        <Handle $x="-2px" $y="calc(50% - 8px)" $w={5} $h={15} /><Handle $x="calc(100% - 3px)" $y="calc(50% - 8px)" $w={5} $h={15} />
        <HeaderTools>
          <button aria-label="Filters"><Icon w={20} h={20} c="#605e5c"><path d="M1 1h18l-7 9v8H8v-8Z" /></Icon></button>
          <button aria-label="Focus mode"><Icon w={18} h={18} c="#605e5c"><path d="M7 2H1v15h15v-6M1 10h7v7M10 1h7v7M17 1l-7 7" /></Icon></button>
          <button aria-label="More options"><Icon w={20} h={4}><g fill="#605e5c" stroke="none"><circle cx="2" cy="2" r="1.500" /><circle cx="10" cy="2" r="1.500" /><circle cx="18" cy="2" r="1.500" /></g></Icon></button>
        </HeaderTools>
      </Influencers>
    </Row>
    <PageEdge />
  </Report>
);

export default function App() {
  return (
    <>
      <Global />
      <Shell>
        <Header />
        <RibbonArea />
        <Work>
          <Rail>
            <RailButton $on aria-label="Report view"><Icon w={18} h={18} c="#222" sw={1.500}><path d="M1 0v17h17M4 4h3v11H4ZM9 8h3v7H9ZM14 2h3v13h-3Z" /></Icon></RailButton>
            <RailButton aria-label="Table view"><Icon w={20} h={20} c="#8a8886"><path d="M1 1h18v18H1ZM1 5h18M1 10h18M1 14.500h18M7 5v14M13 5v14M1 3h18" /></Icon></RailButton>
            <RailButton aria-label="Model view"><Icon w={24} h={24} c="#8a8886"><path d="M1 8h9v9H1ZM1 11h9M14 1h9v9h-9ZM14 4h9M14 14h9v9h-9ZM14 17h9M6 8V4h8M6 17v3h8" /></Icon></RailButton>
            <RailButton aria-label="DAX query view"><Icon w={24} h={22} c="#8a8886"><path d="M6 12V1h7l5 5v11M13 1v5h5M20 6c3 2 2 11-1 14" /><text x="0" y="21" fontSize="8" fontWeight="700" fill="#605e5c" stroke="none" fontFamily="Open Sans">DAX</text></Icon></RailButton>
          </Rail>
          <Center>
            <Stage>
              <CanvasArea />
              <Filters>
                <button aria-label="Expand filters"><Chevrons left /></button>
                <FiltersName><Icon w={15} h={16}><path d="M14 1v14L7 11H1V5h6Z" /></Icon>Filters</FiltersName>
              </Filters>
            </Stage>
            <PageBar>
              <DeviceButton $on aria-label="Desktop layout"><Icon w={24} h={18} c="#605e5c" sw={1.600}><path d="M1 1h22v13H1ZM12 14v3M8 17h8" /></Icon></DeviceButton>
              <DeviceButton aria-label="Mobile layout"><Icon w={16} h={26} c="#605e5c" sw={1.600}><rect x="1" y="1" width="14" height="24" rx="1" /><path d="M6 21h4" /></Icon></DeviceButton>
              <Pager>
                <button aria-label="Previous page"><Icon w={7} h={12}><path d="M7 0v12L0 6Z" fill="#c8c6c4" stroke="none" /></Icon></button>
                <button aria-label="Next page"><Icon w={7} h={12}><path d="M0 0v12l7-6Z" fill="#c8c6c4" stroke="none" /></Icon></button>
              </Pager>
              <PageTab>Page 1</PageTab>
              <AddPage aria-label="Add page"><Icon w={14} h={14} c="#fff" sw={4}><path d="M7 0v14M0 7h14" /></Icon></AddPage>
            </PageBar>
          </Center>
          <Pane>
            <PaneHead><h2>Visualizations</h2><button aria-label="Collapse"><Chevrons /></button></PaneHead>
            <SubHead>Format visual</SubHead>
            <ModeRow>
              <ModeButton aria-label="Build visual"><Icon w={30} h={30} c="#252423"><path d="M0 1h24" /><g strokeDasharray="3 2"><path d="M1 6h28v10H1ZM1 20h28v9H1Z" /></g></Icon></ModeButton>
              <ModeButton $on aria-label="Format visual"><Icon w={28} h={30} c="#252423"><path d="M1 24V12h7M16 7h8" /><rect x="8" y="2" width="8" height="22" fill={green} /><path d="M13 23 24 12c3-2 5-1 3 2L17 26Z" fill="#fff" /><path d="M4 29c4-1 3-6 8-6 6 1 4 7-8 6Z" fill={green} /></Icon></ModeButton>
              <ModeButton aria-label="Analytics"><Icon w={30} h={30} c="#252423"><circle cx="13" cy="13" r="12" /><path d="M2 15l6-5 4 4 9-8M7 15v7M11 17v8M15 16v9M19 12v9" /><path d="M22 21l7 8" strokeWidth="3.500" /></Icon></ModeButton>
            </ModeRow>
            <Notch><Icon w={22} h={11} c="#8a8886" sw={1.200}><path d="M0 10.500h1L11 1l10 9.500h1" /></Icon></Notch>
            <PaneSearch><Lens flip /><PlainInput placeholder="Search" aria-label="Search format options" /></PaneSearch>
            <FormatTabs>
              <button>Visual</button><button>General</button>
              <button aria-label="More"><Icon w={20} h={4}><g fill="#252423" stroke="none"><circle cx="2" cy="2" r="1.200" /><circle cx="10" cy="2" r="1.200" /><circle cx="18" cy="2" r="1.200" /></g></Icon></button>
            </FormatTabs>
            <Section><RightChevron />Analysis</Section>
            <Section><RightChevron />Bubble visual colors</Section>
            <Section><RightChevron />Chart</Section>
          </Pane>
          <Pane>
            <PaneHead><h2>Data</h2><button aria-label="Collapse"><Chevrons /></button></PaneHead>
            <PaneSearch $soft><Lens /><PlainInput placeholder="Search" aria-label="Search data" /></PaneSearch>
            <TableNode>
              <RightChevron />
              <Icon w={24} h={24} c="#444"><rect x="1" y="2" width="15" height="14" rx="2" /><path d="M1 7h15M1 11h15M6 2v14M11 2v14" /><circle cx="15" cy="16.500" r="7.500" fill={green} stroke="none" /><path d="M12 16.500l2 2 4-4" stroke="#fff" strokeWidth="1.600" /></Icon>
              <span>cleaned_sales_data</span>
            </TableNode>
          </Pane>
        </Work>
        <Status>
          Page 1 of 1
          <ZoomTools>
            <b>-</b><Range type="range" min="10" max="190" defaultValue="86" aria-label="Zoom" /><b>+</b>
            <span>86%</span>
            <Icon w={22} h={17} c="#605e5c" sw={1.600}><rect x="1" y="1" width="20" height="15" /><path d="M5 7V4h3M14 4h3v3M17 10v3h-3M8 13H5v-3" /></Icon>
          </ZoomTools>
          Update available (click to download)
        </Status>
      </Shell>
      <Watermark><p lang="ar">نفذلي</p><p>nafezly.com</p></Watermark>
    </>
  );
}
